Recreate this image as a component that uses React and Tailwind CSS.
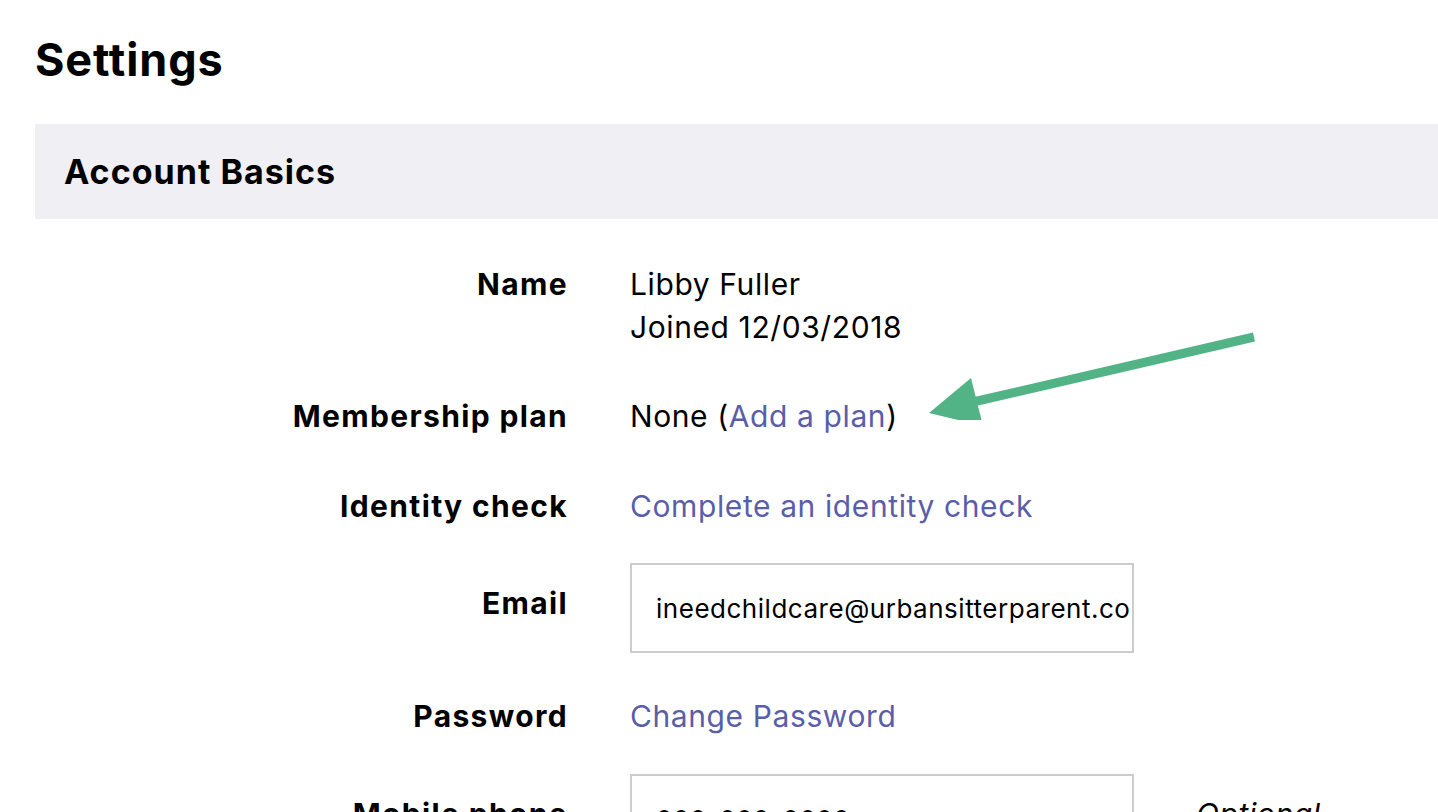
import React from 'react';

function Row({ label, children, className = '', labelClass = '' }) {
  return (
    <div className={`flex gap-[62px] ${className}`}>
      <div className={`w-[533px] shrink-0 text-right font-bold tracking-[0.045em] ${labelClass}`}>{label}</div>
      <div className="flex-1">{children}</div>
    </div>
  );
}

function Field({ value }) {
  return (
    <input
      readOnly
      value={value}
      className="h-[90px] w-[504px] border-2 border-[#cccccc] bg-white pl-[24px] pr-[2px] text-[26px] tracking-[0.02em] text-black outline-none"
    />
  );
}

export default function App() {
  return (
    <div className="h-[812px] w-[1438px] overflow-hidden bg-white pl-[35px] font-['Inter',sans-serif] text-black">
      <h1 className="pt-[30px] text-[45px] font-bold leading-[60px] tracking-[0.02em]">Settings</h1>

      <div className="mt-[34px] flex h-[95px] items-center bg-[#efeff4] pl-[29px]">
        <h2 className="text-[34px] font-bold tracking-[0.03em]">Account Basics</h2>
      </div>

      <div className="relative pt-[44px] text-[30px] leading-[43px] tracking-[0.02em]">
        <Row label="Name">
          <div>Libby Fuller</div>
          <div>Joined 12/03/2018</div>
        </Row>

        <Row label="Membership plan" className="mt-[46px]">
          None (<a className="text-[#5a5ea9]">Add a plan</a>)
        </Row>

        <Row label="Identity check" className="mt-[47px]">
          <a className="text-[#5a5ea9]">Complete an identity check</a>
        </Row>

        <Row label="Email" className="mt-[35px]" labelClass="pt-[19px]">
          <Field value="ineedchildcare@urbansitterparent.com" />
        </Row>

        <Row label="Password" className="mt-[42px]">
          <a className="text-[#5a5ea9]">Change Password</a>
        </Row>

        <Row label="Mobile phone" className="mt-[36px]" labelClass="pt-[19px]">
          <div className="flex items-start gap-[62px]">
            <Field value="000-000-0000" />
            <span className="pt-[19px] italic">Optional</span>
          </div>
        </Row>

        <svg className="absolute left-[885px] top-[91px]" width="350" height="110" viewBox="920 310 350 110">
          <line x1="1254" y1="337" x2="960" y2="405" stroke="#52b486" strokeWidth="9" />
          <polygon points="929,413 971,378 983,426" fill="#52b486" />
        </svg>
      </div>
    </div>
  );
}
